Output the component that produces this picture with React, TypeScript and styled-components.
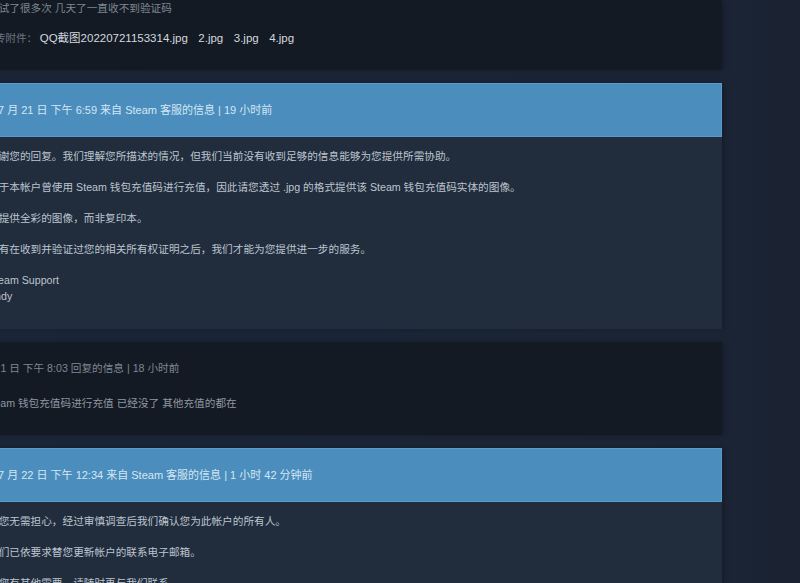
import React from 'react';
import styled, { createGlobalStyle } from 'styled-components';

const GlobalStyle = createGlobalStyle`
  html, body {
    margin: 0;
    padding: 0;
    background: #1b2536;
    overflow: hidden;
  }
  body {
    font-family: "Liberation Sans", Arial, "Noto Sans CJK SC", sans-serif;
    font-size: 10.65px;
    line-height: 16px;
  }
`;

const Page = styled.div`
  width: 800px;
  height: 583px;
  overflow: hidden;
  background: linear-gradient(90deg, #1b2638 0%, #1b2536 90%, #1a2231 100%);
`;

const Thread = styled.div`
  width: 782px;
  margin-left: -60px;
  display: flex;
  flex-direction: column;
  gap: 13px;
`;

const UserPanel = styled.div<{ $pad: string }>`
  background: #141a24;
  padding: ${(p) => p.$pad};
  box-shadow: 2px 0 6px rgba(0, 0, 0, 0.25);
`;

const UserLine = styled.div<{ $indent: number; $color: string }>`
  padding-left: ${(p) => p.$indent}px;
  color: ${(p) => p.$color};
  white-space: nowrap;
`;

const AttachRow = styled.div`
  display: flex;
  align-items: center;
  gap: 10.5px;
  padding-left: 44px;
  margin-top: 14px;
  white-space: nowrap;
`;

const AttachLabel = styled.span`
  color: #6c7683;
  margin-right: -8px;
`;

const FileLink = styled.span`
  color: #d3d9df;
  font-size: 11.5px;
`;

const Reply = styled.div`
  display: flex;
  flex-direction: column;
  box-shadow: 2px 0 6px rgba(0, 0, 0, 0.25);
`;

const ReplyHeader = styled.div`
  height: 52px;
  display: flex;
  align-items: center;
  padding-left: 58px;
  background: #4b8dbd;
  border: 1px solid #5a9bc8;
  border-left: none;
  color: #d4e7f4;
  font-size: 11px;
  white-space: nowrap;
`;

const ReplyBody = styled.div`
  background: #212c3d;
  padding: 11px 0 25px 48px;
  color: #bcc5cf;
`;

const Para = styled.p`
  margin: 0 0 15px;
  white-space: nowrap;
  &:last-child {
    margin-bottom: 0;
  }
`;

const supportReply1 = [
  ['感谢您的回复。我们理解您所描述的情况，但我们当前没有收到足够的信息能够为您提供所需协助。'],
  ['由于本帐户曾使用 Steam 钱包充值码进行充值，因此请您透过 .jpg 的格式提供该 Steam 钱包充值码实体的图像。'],
  ['请提供全彩的图像，而非复印本。'],
  ['只有在收到并验证过您的相关所有权证明之后，我们才能为您提供进一步的服务。'],
  ['Steam Support', 'Andy'],
];

const supportReply2 = [
  ['请您无需担心，经过审慎调查后我们确认您为此帐户的所有人。'],
  ['我们已依要求替您更新帐户的联系电子邮箱。'],
  ['如您有其他需要，请随时再与我们联系。'],
];

const files = ['QQ截图20220721153314.jpg', '2.jpg', '3.jpg', '4.jpg'];

const SupportReply = ({ header, paras }: { header: string; paras: string[][] }) => (
  <Reply>
    <ReplyHeader>{header}</ReplyHeader>
    <ReplyBody>
      {paras.map((lines, i) => (
        <Para key={i}>
          {lines.map((l, j) => (
            <React.Fragment key={j}>
              {j > 0 && <br />}
              {l}
            </React.Fragment>
          ))}
        </Para>
      ))}
    </ReplyBody>
  </Reply>
);

const App = () => {
  return (
    <Page>
      <GlobalStyle />
      <Thread>
        <UserPanel $pad="0 0 24px 0">
          <UserLine $indent={48} $color="#7e8893">尝试了很多次 几天了一直收不到验证码</UserLine>
          <AttachRow>
            <AttachLabel>上传附件：</AttachLabel>
            {files.map((f) => (
              <FileLink key={f}>{f}</FileLink>
            ))}
          </AttachRow>
        </UserPanel>

        <SupportReply header="7 月 21 日 下午 6:59 来自 Steam 客服的信息 | 19 小时前" paras={supportReply1} />

        <UserPanel $pad="18px 0 24px 0">
          <UserLine $indent={32} $color="#7e8893">7 月 21 日 下午 8:03 回复的信息 | 18 小时前</UserLine>
          <UserLine $indent={20} $color="#8f98a2" style={{ marginTop: 19 }}>
            我用 Steam 钱包充值码进行充值 已经没了 其他充值的都在
          </UserLine>
        </UserPanel>

        <SupportReply header="7 月 22 日 下午 12:34 来自 Steam 客服的信息 | 1 小时 42 分钟前" paras={supportReply2} />
      </Thread>
    </Page>
  );
};

export default App;
